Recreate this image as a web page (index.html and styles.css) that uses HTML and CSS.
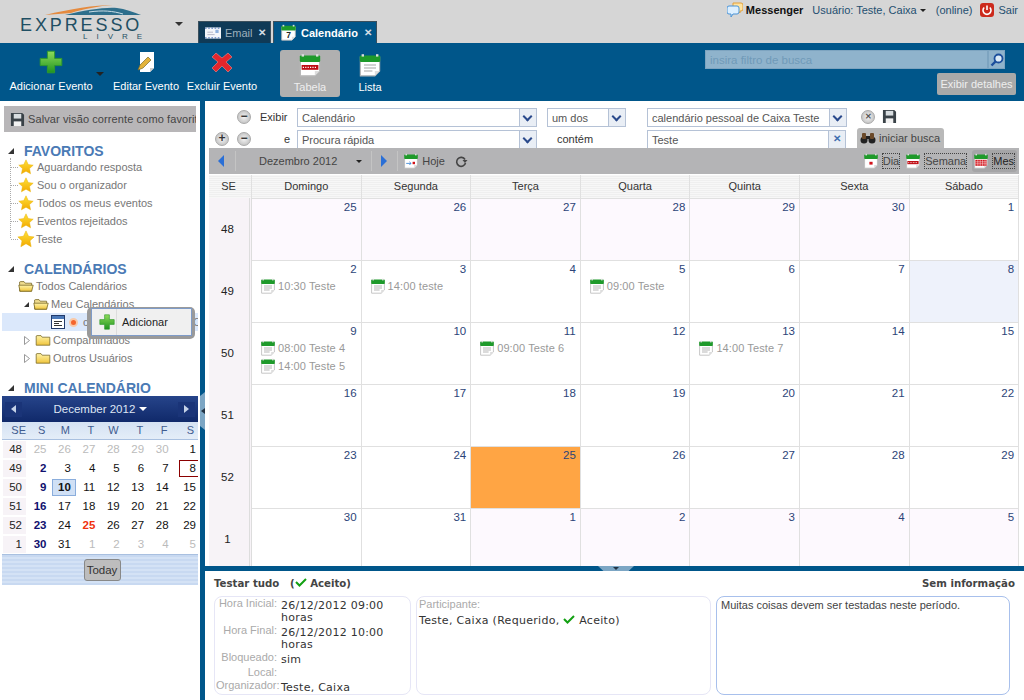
FILE: index.html
```html
<!DOCTYPE html>
<html lang="pt-BR">
<head>
    <meta charset="UTF-8">
    <title>Expresso Livre - Calendário</title>
    <link rel="stylesheet" href="styles.css">
</head>
<body>
<svg class="sprites" width="0" height="0">
    <defs>
        <linearGradient id="greenGrad" x1="0" y1="0" x2="0" y2="1"><stop offset="0" stop-color="#8fdc5a"/><stop offset="1" stop-color="#1f9420"/></linearGradient>
        <linearGradient id="starGrad" x1="0" y1="0" x2="0" y2="1"><stop offset="0" stop-color="#ffe23a"/><stop offset="1" stop-color="#f2a900"/></linearGradient>
        <linearGradient id="folderGrad" x1="0" y1="0" x2="0" y2="1"><stop offset="0" stop-color="#fff3a8"/><stop offset="1" stop-color="#f0c53c"/></linearGradient>
        <symbol id="cal" viewBox="0 0 20 20">
            <path d="M2 3.500h16v11.500l-4 4H2z" fill="#fff" stroke="#b9b9b9"/>
            <path d="M14 19v-4h4z" fill="#ddd"/>
            <rect x="1.500" y="2" width="17" height="5.500" rx="1" fill="#1e9a2a"/>
            <rect x="3" y="1" width="2" height="2" fill="#ddd"/>
            <rect x="15" y="1" width="2" height="2" fill="#ddd"/>
        </symbol>
        <symbol id="calList" viewBox="0 0 20 20">
            <use href="#cal"/>
            <path d="M5 10h10M5 12.500h10M5 15h7" stroke="#a5a5a5"/>
        </symbol>
        <symbol id="calWeek" viewBox="0 0 20 20">
            <use href="#cal"/>
            <rect x="3" y="10" width="14" height="4" fill="#c00d14"/>
            <path d="M4 12h12" stroke="#fff" stroke-dasharray="1 1"/>
        </symbol>
        <symbol id="calMonth" viewBox="0 0 20 20">
            <use href="#cal"/>
            <rect x="3" y="8.500" width="14" height="7.500" fill="#d2121a"/>
            <path d="M3 11h14M3 13.500h14M6 8v8M9 8v8M12 8v8M15 8v8" stroke="#fff" stroke-width=".6"/>
        </symbol>
        <symbol id="calDay" viewBox="0 0 20 20">
            <use href="#cal"/>
            <rect x="8" y="11" width="4" height="3.500" fill="#d2121a"/>
        </symbol>
        <symbol id="plus" viewBox="0 0 20 20">
            <path d="M7 1h6v6h6v6h-6v6H7v-6H1V7h6z" fill="url(#greenGrad)" stroke="#2f9a2c" stroke-width=".8"/>
        </symbol>
        <symbol id="star" viewBox="0 0 20 20">
            <path d="M10 1l2.800 6 6.200.7-4.600 4.300 1.300 6.500-5.700-3.300-5.700 3.300 1.300-6.500L1 7.700 7.200 7z" fill="url(#starGrad)" stroke="#eab308" stroke-width=".6"/>
        </symbol>
        <symbol id="folder" viewBox="0 0 20 20">
            <path d="M1.500 5V16.500h17V6.500H9L7.500 4.500H2.500z" fill="url(#folderGrad)" stroke="#7a6a2a"/>
        </symbol>
        <symbol id="folderOpen" viewBox="0 0 20 20">
            <path d="M2 5V16.500h15V6.500H9L7.500 4.500H3z" fill="#efdc8e" stroke="#7a6a2a"/>
            <path d="M1 9h15.500l2.500 0-2 7.500H2.500z" fill="url(#folderGrad)" stroke="#7a6a2a"/>
        </symbol>
        <symbol id="disk" viewBox="0 0 16 16">
            <path d="M1 1h12l2 2v12H1z" fill="#3a4248"/>
            <rect x="4" y="2" width="8" height="5" fill="#d8dde0"/>
            <rect x="4" y="10" width="8" height="5" fill="#f2f2f2"/>
        </symbol>
        <symbol id="check" viewBox="0 0 12 10">
            <path d="M1 5l3.500 3.500L11 2" fill="none" stroke="#12a012" stroke-width="2"/>
        </symbol>
        <symbol id="treeClosed" viewBox="0 0 6 9">
            <path d="M.5.5l5 4-5 4z" fill="#fff" stroke="#999"/>
        </symbol>
    </defs>
</svg>

<header class="top-bar">
    <div class="logo">
        <svg class="logo-swoosh" width="96" height="11" viewBox="0 0 96 11">
            <path d="M0 10C25 4 50 0 68 0c-14 1-30 4-42 8z" fill="#e58a3e"/>
            <path d="M20 10C40 5 60 2 72 3c8 1 16 4 24 7z" fill="#2e6f8c"/>
            <path d="M44 7c14-2 24-1 34 2" stroke="#c9dde6" fill="none"/>
        </svg>
        <div class="logo-name">EXPRESSO</div>
        <div class="logo-sub">LIVRE</div>
    </div>
    <span class="caret logo-caret"></span>
    <nav class="tabs">
        <div class="tab">
            <svg class="tab-icon" width="16" height="12" viewBox="0 0 20 14">
                <rect width="20" height="14" fill="#f4f6fa"/>
                <path d="M0 1h20M0 13h20" stroke="#1e4fa8" stroke-dasharray="2 2"/>
                <rect x="13" y="3" width="4" height="4" fill="#8eb0dd"/>
                <path d="M3 6h7M3 9h9" stroke="#aab"/>
            </svg>
            Email <span class="tab-close">✕</span>
        </div>
        <div class="tab tab-active">
            <svg class="tab-icon" width="17" height="17" viewBox="0 0 20 20">
                <use href="#cal"/>
                <text x="10" y="17" text-anchor="middle" font-size="10" font-weight="bold" font-family="Liberation Sans" fill="#222">7</text>
            </svg>
            Calendário <span class="tab-close">✕</span>
        </div>
    </nav>
    <div class="user-bar">
        <svg width="16" height="16" viewBox="0 0 16 16">
            <path d="M6 1h8a2 2 0 0 1 2 2v4a2 2 0 0 1-2 2h-1v2l-2-2H6z" fill="#ffe3a0" stroke="#e3a03a"/>
            <path d="M2 4h8a2 2 0 0 1 2 2v4a2 2 0 0 1-2 2H6l-2 3v-3H2a2 2 0 0 1-2-2V6a2 2 0 0 1 2-2z" fill="#dcefff" stroke="#4a93d6"/>
        </svg>
        <b class="messenger">Messenger</b>
        <span>Usuário: Teste, Caixa <span class="caret caret-small"></span></span>
        <span class="online">(online)</span>
        <span class="sair">
            <svg width="14" height="14" viewBox="0 0 14 14">
                <rect width="14" height="14" rx="3" fill="#cc2a1c"/>
                <path d="M4.200 4.500a4 4 0 1 0 5.600 0M7 2.500v4.500" fill="none" stroke="#fff" stroke-width="1.600"/>
            </svg>
            Sair
        </span>
    </div>
</header>

<div class="toolbar">
    <div class="tool tool-add">
        <svg width="24" height="24"><use href="#plus"/></svg>
        <span>Adicionar Evento</span>
    </div>
    <span class="caret tool-caret"></span>
    <div class="tool tool-edit">
        <svg width="24" height="24" viewBox="0 0 24 24">
            <path d="M6 2h14v16l-4 4H6z" fill="#fff"/>
            <path d="M16 22v-4h4z" fill="#ccc"/>
            <path d="M4 20l2-5 8-8 3 3-8 8z" fill="#e3b33a" stroke="#7a6a2a" stroke-width=".7"/>
        </svg>
        <span>Editar Evento</span>
    </div>
    <div class="tool tool-del">
        <svg width="24" height="24" viewBox="0 0 24 24">
            <path d="M6 3l6 5 6-5 4 4-6 5 6 6-4 4-6-6-6 6-4-4 6-6-6-5z" fill="#e3262c" stroke="#f08a8a" stroke-width=".6"/>
        </svg>
        <span>Excluir Evento</span>
    </div>
    <div class="tool tool-view tool-on">
        <svg width="24" height="24"><use href="#calWeek"/></svg>
        <span>Tabela</span>
    </div>
    <div class="tool tool-view">
        <svg width="24" height="24"><use href="#calList"/></svg>
        <span>Lista</span>
    </div>
    <div class="tool-right">
        <div class="search">
            <div class="search-input">insira filtro de busca</div>
            <div class="search-btn">
                <svg width="14" height="14" viewBox="0 0 14 14">
                    <circle cx="8.500" cy="5.500" r="4" fill="#dcebf7" stroke="#1c4f9c" stroke-width="1.800"/>
                    <path d="M5.500 8.500L1.500 12.500" stroke="#1c4f9c" stroke-width="2.400"/>
                </svg>
            </div>
        </div>
        <div class="details-btn">Exibir detalhes</div>
    </div>
</div>

<div class="page">
    <aside class="sidebar">
        <div class="save-view">
            <svg width="15" height="15"><use href="#disk"/></svg>
            <span>Salvar visão corrente como favorito</span>
        </div>

        <h3 class="side-title side-title-first"><span class="arrow-down"></span>FAVORITOS</h3>
        <ul class="fav-list">
            <li><svg width="16" height="16"><use href="#star"/></svg>Aguardando resposta</li>
            <li><svg width="16" height="16"><use href="#star"/></svg>Sou o organizador</li>
            <li><svg width="16" height="16"><use href="#star"/></svg>Todos os meus eventos</li>
            <li><svg width="16" height="16"><use href="#star"/></svg>Eventos rejeitados</li>
            <li class="fav-big"><svg width="18" height="18"><use href="#star"/></svg>Teste</li>
        </ul>

        <h3 class="side-title"><span class="arrow-down"></span>CALENDÁRIOS</h3>
        <ul class="cal-tree">
            <li class="lvl0"><svg width="16" height="16"><use href="#folderOpen"/></svg>Todos Calendários</li>
            <li class="lvl1"><span class="arrow-down arrow-tree"></span><svg width="16" height="16"><use href="#folderOpen"/></svg>Meu Calendários</li>
            <li class="lvl2 selected">
                <svg width="14" height="14" viewBox="0 0 14 14">
                    <rect x=".5" y=".5" width="13" height="13" fill="#fff" stroke="#223a6b"/>
                    <rect x="1" y="1" width="12" height="3" fill="#4a78b8"/>
                    <path d="M3 6.500h8M3 8.500h5M3 10.500h8" stroke="#333"/>
                </svg>
                <span class="cal-dot"></span>calendário pessoal de Caixa Teste
            </li>
            <li class="lvl1"><svg class="tree-closed" width="6" height="9"><use href="#treeClosed"/></svg><svg width="16" height="16"><use href="#folder"/></svg>Compartilhados</li>
            <li class="lvl1"><svg class="tree-closed" width="6" height="9"><use href="#treeClosed"/></svg><svg width="16" height="16"><use href="#folder"/></svg>Outros Usuários</li>
        </ul>

        <h3 class="side-title side-title-mini"><span class="arrow-down"></span>MINI CALENDÁRIO</h3>
        <div class="mini">
            <div class="mini-head">
                <span class="mini-nav"><span class="mini-left"></span></span>
                <span class="mini-month">December 2012 <span class="caret caret-white"></span></span>
                <span class="mini-nav"><span class="mini-right"></span></span>
            </div>
            <div class="mini-days">
                <span>SE</span><span>S</span><span>M</span><span>T</span><span>W</span><span>T</span><span>F</span><span>S</span>
            </div>
            <div class="mini-grid">
                <span class="wk">48</span><span class="off">25</span><span class="off">26</span><span class="off">27</span><span class="off">28</span><span class="off">29</span><span class="off">30</span><span>1</span>
                <span class="wk">49</span><span class="sun">2</span><span>3</span><span>4</span><span>5</span><span>6</span><span>7</span><span class="picked">8</span>
                <span class="wk">50</span><span class="sun">9</span><span class="now">10</span><span>11</span><span>12</span><span>13</span><span>14</span><span>15</span>
                <span class="wk">51</span><span class="sun">16</span><span>17</span><span>18</span><span>19</span><span>20</span><span>21</span><span>22</span>
                <span class="wk">52</span><span class="sun">23</span><span>24</span><span class="hol">25</span><span>26</span><span>27</span><span>28</span><span>29</span>
                <span class="wk">1</span><span class="sun">30</span><span>31</span><span class="off">1</span><span class="off">2</span><span class="off">3</span><span class="off">4</span><span class="off">5</span>
            </div>
            <div class="mini-foot"><span class="today-btn">Today</span></div>
        </div>

        <div class="context-menu">
            <div class="context-item">
                <svg width="16" height="16"><use href="#plus"/></svg>
                <span>Adicionar</span>
            </div>
        </div>
    </aside>

    <div class="side-handle"><span class="mini-left"></span></div>

    <main class="main">
        <div class="filters">
            <div class="filter-row">
                <span class="fbtn-slot"></span>
                <span class="round-btn">−</span>
                <label class="flabel flabel-left">Exibir</label>
                <div class="combo combo-a">Calendário<i class="combo-arrow"></i></div>
                <div class="combo combo-b">um dos<i class="combo-arrow"></i></div>
                <div class="combo combo-c">calendário pessoal de Caixa Teste<i class="combo-arrow"></i></div>
                <span class="round-btn round-x">✕</span>
                <svg class="filter-save" width="15" height="15"><use href="#disk"/></svg>
            </div>
            <div class="filter-row">
                <span class="round-btn">+</span>
                <span class="round-btn">−</span>
                <label class="flabel">e</label>
                <div class="combo combo-a">Procura rápida<i class="combo-arrow"></i></div>
                <div class="flabel-mid">contém</div>
                <div class="combo combo-d">Teste<i class="combo-clear">✕</i></div>
                <div class="search-tab">
                    <svg width="16" height="12" viewBox="0 0 16 12">
                        <circle cx="4" cy="8" r="3.500" fill="#222"/>
                        <circle cx="12" cy="8" r="3.500" fill="#222"/>
                        <rect x="2" y="1" width="4" height="6" rx="1" fill="#6b4a2a"/>
                        <rect x="10" y="1" width="4" height="6" rx="1" fill="#6b4a2a"/>
                        <rect x="6" y="4" width="4" height="3" fill="#222"/>
                    </svg>
                    iniciar busca
                </div>
            </div>
        </div>

        <div class="cal-bar">
            <span class="nav-left"></span>
            <span class="sep"></span>
            <span class="cal-month">Dezembro 2012</span>
            <span class="caret cal-caret"></span>
            <span class="sep"></span>
            <span class="nav-right"></span>
            <span class="sep"></span>
            <svg class="hoje-icon" width="16" height="16" viewBox="0 0 20 20">
                <use href="#cal"/>
                <path d="M4 13h6M8 11l2 2-2 2" stroke="#2a7bd0" fill="none"/>
                <rect x="12" y="11" width="3" height="3" fill="#d2121a"/>
            </svg>
            <span class="hoje">Hoje</span>
            <svg class="refresh" width="14" height="14" viewBox="0 0 14 14">
                <path d="M11 5.500A4.500 4.500 0 1 0 11.500 9" fill="none" stroke="#444" stroke-width="1.600"/>
                <path d="M8.500 6h5l-2.500 3z" fill="#444"/>
            </svg>
            <div class="view-btns">
                <div class="view-btn"><svg width="16" height="16"><use href="#calDay"/></svg><span>Dia</span></div>
                <div class="view-btn"><svg width="16" height="16"><use href="#calWeek"/></svg><span>Semana</span></div>
                <div class="view-btn view-on"><svg width="16" height="16"><use href="#calMonth"/></svg><span>Mes</span></div>
            </div>
        </div>

        <div class="cal-head">
            <div class="head-se">SE</div>
            <div>Domingo</div><div>Segunda</div><div>Terça</div><div>Quarta</div><div>Quinta</div><div>Sexta</div><div>Sábado</div>
        </div>

        <div class="cal-grid">
            <div class="wk-cell">48</div>
            <div class="day other"><b>25</b></div><div class="day other"><b>26</b></div><div class="day other"><b>27</b></div><div class="day other"><b>28</b></div><div class="day other"><b>29</b></div><div class="day other"><b>30</b></div><div class="day"><b>1</b></div>

            <div class="wk-cell">49</div>
            <div class="day"><b>2</b><p class="ev"><svg width="16" height="16"><use href="#calList"/></svg>10:30 Teste</p></div>
            <div class="day"><b>3</b><p class="ev"><svg width="16" height="16"><use href="#calList"/></svg>14:00 teste</p></div>
            <div class="day"><b>4</b></div>
            <div class="day"><b>5</b><p class="ev"><svg width="16" height="16"><use href="#calList"/></svg>09:00 Teste</p></div>
            <div class="day"><b>6</b></div><div class="day"><b>7</b></div><div class="day sel"><b>8</b></div>

            <div class="wk-cell">50</div>
            <div class="day"><b>9</b><p class="ev"><svg width="16" height="16"><use href="#calList"/></svg>08:00 Teste 4</p><p class="ev"><svg width="16" height="16"><use href="#calList"/></svg>14:00 Teste 5</p></div>
            <div class="day"><b>10</b></div>
            <div class="day"><b>11</b><p class="ev"><svg width="16" height="16"><use href="#calList"/></svg>09:00 Teste 6</p></div>
            <div class="day"><b>12</b></div>
            <div class="day"><b>13</b><p class="ev"><svg width="16" height="16"><use href="#calList"/></svg>14:00 Teste 7</p></div>
            <div class="day"><b>14</b></div><div class="day"><b>15</b></div>

            <div class="wk-cell">51</div>
            <div class="day"><b>16</b></div><div class="day"><b>17</b></div><div class="day"><b>18</b></div><div class="day"><b>19</b></div><div class="day"><b>20</b></div><div class="day"><b>21</b></div><div class="day"><b>22</b></div>

            <div class="wk-cell">52</div>
            <div class="day"><b>23</b></div><div class="day"><b>24</b></div><div class="day today"><b>25</b></div><div class="day"><b>26</b></div><div class="day"><b>27</b></div><div class="day"><b>28</b></div><div class="day"><b>29</b></div>

            <div class="wk-cell">1</div>
            <div class="day"><b>30</b></div><div class="day"><b>31</b></div><div class="day other"><b>1</b></div><div class="day other"><b>2</b></div><div class="day other"><b>3</b></div><div class="day other"><b>4</b></div><div class="day other"><b>5</b></div>
        </div>

        <div class="bottom-line"><span class="bottom-handle"></span></div>

        <section class="details">
            <div class="details-title">
                <span>Testar tudo &nbsp; (<svg width="12" height="10"><use href="#check"/></svg> Aceito)</span>
                <span>Sem informação</span>
            </div>
            <div class="details-boxes">
                <div class="box box-info">
                    <label>Hora Inicial:</label><div>26/12/2012 09:00 horas</div>
                    <label>Hora Final:</label><div>26/12/2012 10:00 horas</div>
                    <label>Bloqueado:</label><div>sim</div>
                    <label>Local:</label><div></div>
                    <label class="org">Organizador:</label><div class="org">Teste, Caixa</div>
                </div>
                <div class="box box-part">
                    <label>Participante:</label>
                    <div>Teste, Caixa (Requerido, <svg width="12" height="10"><use href="#check"/></svg> Aceito)</div>
                </div>
                <div class="box box-desc">Muitas coisas devem ser testadas neste período.</div>
            </div>
        </section>
    </main>
</div>
</body>
</html>
```

FILE: styles.css
```css
* {
    box-sizing: border-box;
}

html, body {
    margin: 0;
    height: 700px;
    overflow: hidden;
}

body {
    font-family: "Liberation Sans", Arial, sans-serif;
    font-size: 11px;
    color: #333;
    background: #fff;
}

.sprites {
    display: block;
    height: 0;
}

.caret {
    display: inline-block;
    border-left: 4px solid transparent;
    border-right: 4px solid transparent;
    border-top: 4px solid #333;
}

/* top bar */
.top-bar {
    height: 43px;
    background: #d6d6d6;
    display: flex;
    align-items: flex-end;
}

.logo {
    width: 175px;
    height: 43px;
    padding: 5px 0 0 20px;
    color: #1f4f63;
    flex: none;
}

.logo-swoosh {
    display: block;
    margin-left: 25px;
}

.logo-name {
    font-size: 18px;
    line-height: 14px;
    letter-spacing: 2.9px;
    margin-top: 2px;
}

.logo-sub {
    font-size: 8px;
    line-height: 9px;
    letter-spacing: 9px;
    margin-left: 63px;
}

.logo-caret {
    align-self: flex-start;
    margin: 22px 0 0 0;
    flex: none;
}

.tabs {
    display: flex;
    gap: 2px;
    margin-left: 15px;
}

.tab {
    height: 22px;
    width: 73px;
    background: #0f3a57;
    border: 1px solid #3b4f5c;
    border-bottom: none;
    color: #9db0bd;
    font-size: 11px;
    display: flex;
    align-items: center;
    padding-left: 6px;
    white-space: nowrap;
}

.tab-active {
    width: 104px;
    background: #00568a;
    color: #fff;
    font-weight: bold;
}

.tab-icon {
    margin-right: 4px;
    flex: none;
}

.tab-close {
    margin-left: auto;
    margin-right: 4px;
    font-size: 10px;
    font-weight: bold;
    color: #d5dee5;
}

.user-bar {
    margin-left: auto;
    align-self: flex-start;
    display: flex;
    align-items: center;
    gap: 8px;
    padding: 2px 6px 0 0;
    height: 18px;
    color: #1f4f70;
    font-size: 11px;
}

.messenger {
    color: #111;
    margin-left: -5px;
    margin-right: 1px;
}

.caret-small {
    border-width: 3px 3px 0;
    border-top-color: #222;
    vertical-align: 2px;
}

.online {
    margin-left: 2px;
}

.sair {
    display: flex;
    align-items: center;
    gap: 4px;
}

/* blue toolbar */
.toolbar {
    height: 58px;
    background: #00568a;
    display: flex;
    position: relative;
    color: #fff;
}

.tool {
    display: flex;
    flex-direction: column;
    align-items: center;
    color: #fff;
    font-size: 11px;
    white-space: nowrap;
    padding-top: 7px;
}

.tool span {
    margin-top: 6px;
}

.tool-add {
    margin-left: 10px;
    width: 82px;
}

.tool-caret {
    border-top-color: #222;
    margin: 29px 0 0 4px;
    height: 0;
}

.tool-edit {
    margin-left: 9px;
    width: 66px;
}

.tool-del {
    margin-left: 8px;
    width: 70px;
}

.tool-view {
    width: 60px;
    margin-left: 0;
    height: 47px;
    margin-top: 7px;
    padding-top: 3px;
    border-radius: 3px;
}

.tool-on {
    margin-left: 23px;
    background: #b0b0b0;
    color: #eee;
}

.tool-view span {
    margin-top: 4px;
}

.tool-right {
    margin-left: auto;
    display: flex;
    flex-direction: column;
    align-items: flex-end;
    padding: 7px 8px 0 0;
}

.search {
    display: flex;
    margin-right: 11px;
    height: 19px;
}

.search-input {
    width: 283px;
    background: #8fb3cc;
    border: 1px solid #7da4c0;
    color: #6f9ab8;
    padding: 3px 4px;
    font-size: 11.5px;
}

.search-btn {
    width: 17px;
    background: #8fb3cc;
    border: 1px solid #7da4c0;
    display: flex;
    align-items: center;
    justify-content: center;
}

.details-btn {
    margin-top: 4px;
    width: 79px;
    height: 22px;
    background: #a9a9a9;
    color: #eee;
    border-radius: 2px;
    font-size: 11px;
    line-height: 22px;
    text-align: center;
}

/* page body */
.page {
    display: flex;
    height: 599px;
    position: relative;
}

.sidebar {
    width: 200px;
    flex: none;
    padding: 5px 2px 0 2px;
    position: relative;
    overflow: hidden;
    color: #777;
}

.save-view {
    margin: 0 2px;
    height: 26px;
    width: 192px;
    background: #b8b6b8;
    display: flex;
    align-items: center;
    gap: 3px;
    padding-left: 6px;
    color: #444;
    font-size: 11px;
    letter-spacing: 0.1px;
    white-space: nowrap;
    overflow: hidden;
}

.save-view svg {
    flex: none;
}

.side-title {
    margin: 0;
    font-size: 14px;
    line-height: 16px;
    color: #4a7ab5;
    font-weight: bold;
    padding-left: 22px;
    position: relative;
}

.side-title-first {
    margin-top: 11px;
}

.side-title .arrow-down {
    position: absolute;
    left: 6px;
    top: 5px;
}

.arrow-down {
    display: inline-block;
    width: 0;
    height: 0;
    border-left: 6px solid transparent;
    border-bottom: 6px solid #333;
}

.fav-list, .cal-tree {
    list-style: none;
    margin: 0;
    padding: 0;
}

.fav-list {
    margin: -1px 0 23px 8px;
    border-left: 1px dotted #aaa;
    height: 80px;
}

.fav-list li {
    height: 18px;
    display: flex;
    align-items: center;
    gap: 3px;
    font-size: 11px;
    white-space: nowrap;
}

.fav-list li::before {
    content: "";
    width: 7px;
    margin-right: -3px;
    border-top: 1px dotted #aaa;
}

.fav-big svg {
    margin-right: -2px;
    margin-left: -1px;
}

.cal-tree {
    margin-bottom: 13px;
}

.cal-tree li {
    height: 18px;
    display: flex;
    align-items: center;
    gap: 2px;
    font-size: 11px;
    white-space: nowrap;
    overflow: hidden;
}

.cal-tree svg {
    flex: none;
}

.lvl0 {
    padding-left: 16px;
}

.lvl1 {
    padding-left: 22px;
}

.arrow-tree {
    border-left-width: 5px;
    border-bottom-width: 5px;
    margin-right: 2px;
}

.tree-closed {
    margin-right: 3px;
}

.lvl2 {
    padding-left: 49px;
}

.selected {
    background: #dbe8fb;
}

.cal-dot {
    width: 9px;
    height: 9px;
    flex: none;
    border-radius: 50%;
    background: #f4642c;
    border: 2px solid #f9c9a8;
    margin: 0 3px 0 2px;
}

.side-title-mini {
    margin-bottom: 0;
}

/* mini calendar */
.mini {
    width: 196px;
    color: #111;
}

.mini-head {
    height: 26px;
    background: linear-gradient(#26448a, #10296a);
    display: flex;
    align-items: center;
    justify-content: space-between;
    padding: 0 3px;
    color: #dfe6f4;
    font-size: 11.5px;
}

.mini-nav {
    width: 17px;
    height: 15px;
    background: #1a3478;
    display: flex;
    align-items: center;
    justify-content: center;
}

.mini-left, .mini-right {
    width: 0;
    height: 0;
    border-top: 4px solid transparent;
    border-bottom: 4px solid transparent;
}

.mini-left {
    border-right: 5px solid #c5d2e8;
}

.mini-right {
    border-left: 5px solid #c5d2e8;
}

.caret-white {
    border-top-color: #fff;
    vertical-align: 2px;
}

.mini-days {
    height: 18px;
    display: grid;
    grid-template-columns: 25px repeat(7, 1fr);
    background: linear-gradient(#d5e2f3, #e4edf8);
    border-bottom: 1px solid #a9c0e0;
    color: #3f5c8f;
    line-height: 17px;
    font-size: 11px;
}

.mini-days span {
    text-align: right;
    padding-right: 6px;
}

.mini-days span:first-child {
    padding-right: 1px;
}

.mini-days span:last-child {
    padding-right: 4px;
}

.mini-grid {
    display: grid;
    grid-template-columns: 25px repeat(7, 1fr);
    grid-auto-rows: 19px;
    height: 114px;
    font-size: 11.5px;
}

.mini-grid span {
    text-align: right;
    padding-right: 5px;
    line-height: 17px;
    height: 17px;
    margin-top: 1px;
}

.mini-grid span:nth-child(8n) {
    padding-right: 2px;
}

.mini-grid .wk {
    background: #f7f3f7;
    margin-left: 1px;
    margin-right: 1px;
    padding-right: 4px;
    color: #222;
}

.mini-grid .off {
    color: #bbb;
}

.mini-grid .sun {
    color: #10106e;
    font-weight: bold;
}

.mini-grid .now {
    background: #d0e0f5;
    border: 1px solid #8aaddc;
    font-weight: bold;
    line-height: 15px;
    padding-right: 4px;
    margin-left: 1px;
}

.mini-grid .hol {
    color: #f0320c;
    font-weight: bold;
}

.mini-grid .picked {
    border: 1px solid #8b0000;
    border-right: none;
    line-height: 15px;
    margin-left: 5px;
}

.mini-foot {
    height: 31px;
    background: repeating-linear-gradient(#c8d9f1 0 2px, #d4e2f5 2px 4px);
    border-top: 1px solid #a9c0e0;
    display: flex;
    align-items: center;
    justify-content: center;
    padding-left: 4px;
}

.today-btn {
    width: 37px;
    height: 22px;
    background: #bdbdbd;
    border: 1px solid #888;
    border-radius: 3px;
    text-align: center;
    line-height: 20px;
    color: #333;
    font-size: 11.5px;
}

/* context menu on the tree */
.context-menu {
    position: absolute;
    left: 87px;
    top: 206px;
    width: 108px;
    height: 32px;
    background: #9a9a9a;
    border-radius: 5px;
    padding: 1px 3px 3px 4px;
}

.context-item {
    height: 28px;
    background: #f0f0f0;
    border: 1px solid #7e9bc8;
    display: flex;
    align-items: center;
    padding-left: 7px;
    color: #222;
}

.context-item span {
    border-left: 1px solid #ddd;
    margin-left: 1px;
    padding-left: 5px;
    line-height: 26px;
}

.side-handle {
    position: absolute;
    left: 200px;
    top: 291px;
    width: 5px;
    height: 38px;
    background: #7ca6c4;
    z-index: 2;
    display: flex;
    align-items: center;
    justify-content: center;
    clip-path: polygon(0 4px, 100% 0, 100% 100%, 0 calc(100% - 4px));
}

.side-handle .mini-left {
    border-right-color: #234;
    border-right-width: 4px;
    border-top-width: 3px;
    border-bottom-width: 3px;
}

/* main area */
.main {
    flex: 1;
    min-width: 0;
    border-left: 5px solid #00568a;
    padding-top: 5px;
    display: flex;
    flex-direction: column;
    position: relative;
}

.filters {
    height: 42px;
    overflow: hidden;
}

.filter-row {
    display: flex;
    align-items: center;
    height: 22px;
}

.filter-row + .filter-row {
    align-items: flex-start;
    padding-top: 2px;
    height: 20px;
}

.fbtn-slot {
    width: 14px;
    margin-left: 10px;
    flex: none;
}

.round-btn {
    width: 14px;
    height: 14px;
    flex: none;
    margin: 0 0 0 8px;
    border-radius: 50%;
    background: radial-gradient(#f4f4f4, #b5b5b5);
    border: 1px solid #aaa;
    color: #333;
    font-weight: bold;
    font-size: 12px;
    line-height: 11px;
    text-align: center;
}

.filter-row + .filter-row .round-btn {
    margin-top: 2px;
}

.filter-row + .filter-row .round-btn:first-child {
    margin-left: 10px;
}

.flabel {
    width: 46px;
    text-align: right;
    padding-right: 7px;
    margin-left: 0;
    color: #333;
    flex: none;
    font-size: 11px;
    line-height: 18px;
}

.flabel-left {
    text-align: left;
    padding: 0 0 0 9px;
}

.combo {
    height: 19px;
    border: 1px solid #b5c2d6;
    background: #fff;
    padding: 0 4px;
    line-height: 18px;
    color: #555;
    font-size: 11px;
    position: relative;
    flex: none;
    white-space: nowrap;
}

.combo-arrow, .combo-clear {
    position: absolute;
    right: 0;
    top: 0;
    width: 17px;
    height: 17px;
    background: #e9eef5;
    border-left: 1px solid #b5c2d6;
}

.combo-arrow::after {
    content: "";
    position: absolute;
    left: 4px;
    top: 4px;
    width: 5px;
    height: 5px;
    border-right: 2px solid #2a4a8c;
    border-bottom: 2px solid #2a4a8c;
    transform: rotate(45deg);
}

.combo-clear {
    font-style: normal;
    font-size: 10px;
    color: #3f6fb0;
    text-align: center;
    line-height: 16px;
    font-weight: bold;
}

.combo-a {
    width: 240px;
}

.combo-b {
    width: 79px;
    margin-left: 10px;
}

.combo-c {
    width: 200px;
    margin-left: 21px;
}

.combo-d {
    width: 199px;
}

.flabel-mid {
    width: 110px;
    padding-left: 20px;
    line-height: 18px;
    color: #333;
    font-size: 11px;
    flex: none;
}

.round-x {
    margin-left: 14px;
    font-size: 8px;
    line-height: 12px;
    color: #555;
}

.filter-save {
    margin-left: 7px;
    margin-top: -2px;
}

.search-tab {
    margin-left: 11px;
    margin-top: -2px;
    width: 87px;
    height: 20px;
    background: #b9b9b9;
    border-radius: 3px 3px 0 0;
    display: flex;
    align-items: center;
    gap: 3px;
    padding-left: 3px;
    color: #444;
    font-size: 11px;
    white-space: nowrap;
}

/* calendar bar */
.cal-bar {
    height: 26px;
    margin-left: 4px;
    margin-right: 5px;
    background: #b4b4b6;
    display: flex;
    align-items: center;
    color: #444;
    font-size: 11px;
    flex: none;
}

.nav-left, .nav-right {
    width: 0;
    height: 0;
    border-top: 6px solid transparent;
    border-bottom: 6px solid transparent;
}

.nav-left {
    border-right: 6px solid #2a6fd6;
    margin-left: 9px;
}

.nav-right {
    border-left: 6px solid #2a6fd6;
    margin-left: 9px;
}

.sep {
    width: 1px;
    height: 20px;
    background: #c4c4c4;
    margin-left: 11px;
}

.cal-month {
    margin-left: 23px;
    white-space: nowrap;
}

.cal-caret {
    margin-left: 19px;
    border-top-color: #222;
    border-width: 3px 3px 0;
}

.cal-caret + .sep {
    margin-left: 9px;
}

.nav-right + .sep {
    margin-left: 10px;
}

.hoje-icon {
    margin-left: 5px;
}

.hoje {
    margin-left: 3px;
}

.refresh {
    margin-left: 9px;
}

.view-btns {
    margin-left: auto;
    display: flex;
    align-items: center;
    gap: 5px;
    margin-right: 2px;
}

.view-btn {
    display: flex;
    align-items: center;
    gap: 3px;
}

.view-btn span {
    border: 1px dotted #444;
    line-height: 14px;
}

.view-on {
    background: #a5a5a7;
    border-radius: 3px;
    height: 22px;
    padding: 0 2px 0 1px;
    color: #222;
}

/* month grid */
.cal-head, .cal-grid {
    display: grid;
    grid-template-columns: 43px repeat(7, 109.6px);
    margin-left: 4px;
    width: 810px;
    flex: none;
}

.cal-head {
    height: 24px;
    background: repeating-linear-gradient(#f7f7f7 0 1px, #efefef 1px 2px);
    border-top: 1px solid #fff;
    line-height: 22px;
    text-align: center;
    color: #333;
}

.cal-head div {
    border-right: 1px solid #e0e0e0;
}

.head-se {
    padding-right: 3px;
}

.cal-grid {
    grid-template-rows: repeat(6, 62px);
    height: 368px;
    overflow: hidden;
}

.wk-cell {
    background: #f7f3f7;
    border-right: 3px double #ddd;
    text-align: center;
    padding: 24px 3px 0 0;
    line-height: 14px;
    font-size: 11.5px;
    color: #222;
}

.day {
    border-right: 1px solid #e0e0e0;
    border-top: 1px solid #e0e0e0;
    padding: 1px 3px 0 8px;
    overflow: hidden;
}

.day b {
    display: block;
    text-align: right;
    font-weight: normal;
    font-size: 11.5px;
    line-height: 14px;
    color: #2c4478;
    padding-right: 1px;
}

.other {
    background: #fdf9fe;
}

.sel {
    background: #eef2fb;
}

.today {
    background: #ffa544;
}

.ev {
    margin: 0;
    height: 18px;
    display: flex;
    align-items: center;
    gap: 2px;
    color: #999;
    font-size: 11px;
    white-space: nowrap;
    letter-spacing: 0.1px;
}

.day b + .ev {
    margin-top: 1px;
}

/* detail panel */
.bottom-line {
    height: 5px;
    background: #00568a;
    flex: none;
    position: relative;
}

.bottom-handle {
    position: absolute;
    left: 393px;
    width: 36px;
    height: 5px;
    background: #7ca6c4;
    clip-path: polygon(0 0, 100% 0, 85% 100%, 15% 100%);
}

.bottom-handle::after {
    content: "";
    position: absolute;
    left: 15px;
    top: 1px;
    border-left: 3px solid transparent;
    border-right: 3px solid transparent;
    border-top: 3px solid #234;
}

.details {
    flex: 1;
    padding: 6px 9px 0 9px;
    min-height: 0;
}

.details-title {
    display: flex;
    justify-content: space-between;
    font-family: "DejaVu Sans", sans-serif;
    font-weight: bold;
    font-size: 10.2px;
    line-height: 14px;
    color: #444;
}

.details-boxes {
    margin-top: 5px;
    display: flex;
    gap: 5px;
}

.box {
    height: 99px;
    border: 1px solid #e6e6f6;
    border-radius: 8px;
    overflow: hidden;
}

.box label {
    color: #aaa;
}

.box-info {
    width: 197px;
    padding: 3px 2px 0 1px;
    display: grid;
    grid-template-columns: 61px 1fr;
    column-gap: 4px;
    row-gap: 3px;
    align-content: start;
    font-family: "DejaVu Sans", sans-serif;
    font-size: 11px;
    line-height: 12px;
    letter-spacing: 0.25px;
    color: #333;
}

.box-info label {
    font-family: "Liberation Sans", sans-serif;
    text-align: right;
    font-size: 11px;
    letter-spacing: 0;
    white-space: nowrap;
    margin-top: -3px;
}

.box-info .org {
    margin-top: 1px;
}

.box-info label.org {
    margin-top: -2px;
}

.box-part {
    width: 295px;
    font-family: "DejaVu Sans", sans-serif;
    font-size: 11px;
    letter-spacing: 0.3px;
    padding: 0 2px;
    color: #333;
}

.box-part label {
    font-family: "Liberation Sans", sans-serif;
    display: block;
    font-size: 11px;
    letter-spacing: 0;
    line-height: 14px;
    margin-bottom: 3px;
}

.box-desc {
    width: 294px;
    border-color: #a8c0ec;
    color: #444;
    padding: 2px 4px;
    font-size: 11px;
}
```
